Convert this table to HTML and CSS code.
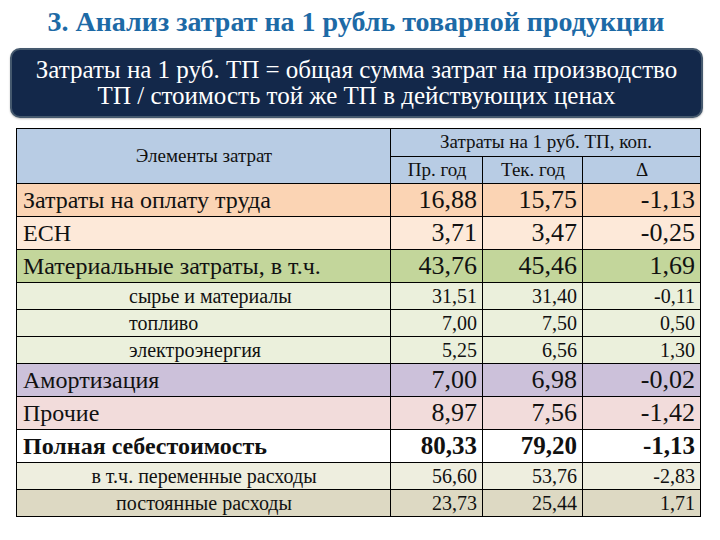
FILE: index.html
```html
<!DOCTYPE html>
<html lang="ru">
<head>
<meta charset="utf-8">
<title>Анализ затрат</title>
<link rel="stylesheet" href="styles.css">
</head>
<body>
<div class="slide">
  <h1 class="title">3. Анализ затрат на 1 рубль товарной продукции</h1>
  <div class="formula">Затраты на 1 руб. ТП = общая сумма затрат на производство<br>ТП / стоимость той же ТП в действующих ценах</div>
  <table class="costs">
    <colgroup>
      <col class="c-name"><col class="c-prev"><col class="c-cur"><col class="c-delta">
    </colgroup>
    <thead>
      <tr class="h1">
        <th rowspan="2" class="h-name">Элементы затрат</th>
        <th colspan="3">Затраты на 1 руб. ТП, коп.</th>
      </tr>
      <tr class="h2">
        <th>Пр. год</th><th>Тек. год</th><th>Δ</th>
      </tr>
    </thead>
    <tbody>
      <tr class="big labor"><td>Затраты на оплату труда</td><td>16,88</td><td>15,75</td><td>-1,13</td></tr>
      <tr class="big esn"><td>ЕСН</td><td>3,71</td><td>3,47</td><td>-0,25</td></tr>
      <tr class="big mat"><td>Материальные затраты, в т.ч.</td><td>43,76</td><td>45,46</td><td>1,69</td></tr>
      <tr class="small sub"><td class="indent">сырье и материалы</td><td>31,51</td><td>31,40</td><td>-0,11</td></tr>
      <tr class="small sub"><td class="indent">топливо</td><td>7,00</td><td>7,50</td><td>0,50</td></tr>
      <tr class="small sub"><td class="indent">электроэнергия</td><td>5,25</td><td>6,56</td><td>1,30</td></tr>
      <tr class="big amort"><td>Амортизация</td><td>7,00</td><td>6,98</td><td>-0,02</td></tr>
      <tr class="big other"><td>Прочие</td><td>8,97</td><td>7,56</td><td>-1,42</td></tr>
      <tr class="big total"><td>Полная себестоимость</td><td>80,33</td><td>79,20</td><td>-1,13</td></tr>
      <tr class="small var"><td class="center">в т.ч. переменные расходы</td><td>56,60</td><td>53,76</td><td>-2,83</td></tr>
      <tr class="small fixed"><td class="center">постоянные расходы</td><td>23,73</td><td>25,44</td><td>1,71</td></tr>
    </tbody>
  </table>
</div>
</body>
</html>
```

FILE: styles.css
```css
html, body {
  margin: 0;
  padding: 0;
  background: #ffffff;
}

.slide {
  width: 720px;
  height: 540px;
  display: flex;
  flex-direction: column;
  font-family: "Liberation Serif", serif;
  color: #111111;
}

.title {
  margin: 0;
  height: 48px;
  line-height: 44px;
  font-size: 28px;
  font-weight: bold;
  text-align: center;
  color: #1d6aa6;
  padding-right: 8px;
}

.formula {
  margin: 0 17px 0 10px;
  height: 70px;
  box-sizing: border-box;
  padding-top: 7px;
  border: 2px solid #45596e;
  border-radius: 10px;
  background: #13284a;
  color: #ffffff;
  font-size: 25px;
  line-height: 26px;
  text-align: center;
  box-shadow: 0 1px 2px rgba(0, 0, 0, 0.25);
}

.costs {
  margin: 10px 0 0 16px;
  width: 684px;
  table-layout: fixed;
  border-collapse: collapse;
  border: 1px solid #000;
  line-height: 1.1;
}

.c-name { width: 374px; }
.c-prev { width: 92px; }
.c-cur { width: 100px; }
.c-delta { width: 118px; }

.costs th,
.costs td {
  border: 1px solid #000;
  padding: 0 5px 0 6px;
  overflow: hidden;
  white-space: nowrap;
}

.costs th {
  background: #b8cce4;
  font-weight: normal;
  font-size: 19px;
  text-align: center;
}

.h1 { height: 28px; }
.h2 { height: 27px; }

.costs td { text-align: right; }
.costs td:first-child { text-align: left; }

.big { height: 33px; }
.big td { font-size: 26px; }
.big td:first-child { font-size: 24px; }
.total td { font-size: 25px; }

.small { height: 27px; }
.small td { font-size: 20px; }
.small td:first-child { font-size: 20px; }

.costs td.indent { padding-left: 112px; }
.costs td.center { text-align: center; }

.labor td { background: #fbd4b4; }
.esn td { background: #fde9d9; }
.mat td { background: #c3d69b; }
.sub td { background: #ebf0dc; }
.amort td { background: #ccc1da; }
.other td { background: #f2dcdb; }
.total td { background: #ffffff; font-weight: bold; }
.var td { background: #eeeedf; }
.fixed td { background: #ddd9c3; }
```
